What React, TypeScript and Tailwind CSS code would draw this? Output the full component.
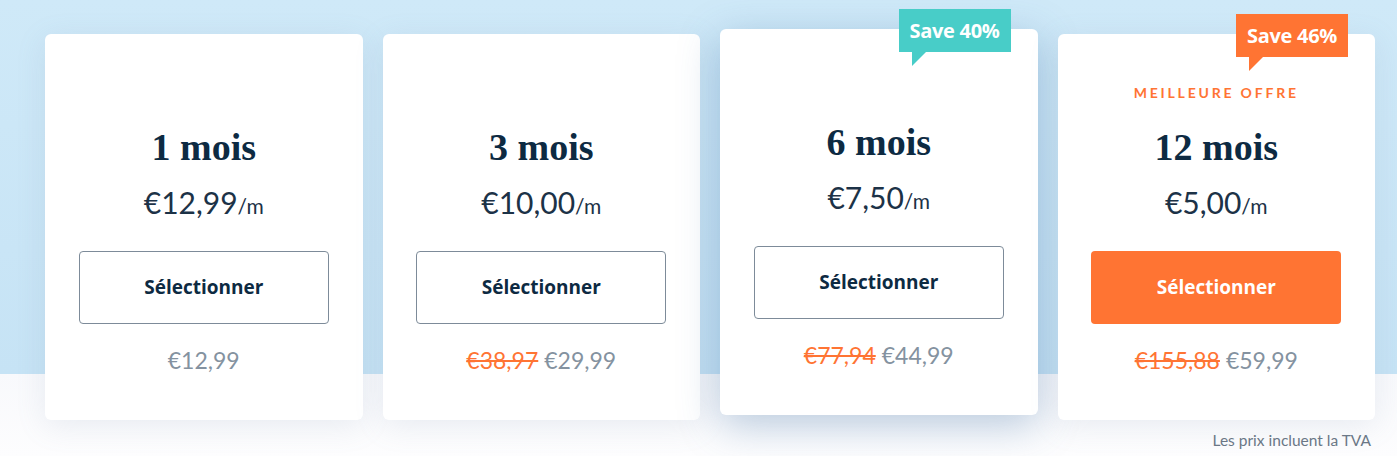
type Plan = {
  months: string;
  price: string;
  oldPrice?: string;
  total: string;
  badge?: string;
  badgeColor?: "teal" | "orange";
  best?: boolean;
  raised?: boolean;
};

const plans: Plan[] = [
  { months: "1 mois", price: "€12,99", total: "€12,99" },
  { months: "3 mois", price: "€10,00", oldPrice: "€38,97", total: "€29,99" },
  {
    months: "6 mois",
    price: "€7,50",
    oldPrice: "€77,94",
    total: "€44,99",
    badge: "Save 40%",
    badgeColor: "teal",
    raised: true,
  },
  {
    months: "12 mois",
    price: "€5,00",
    oldPrice: "€155,88",
    total: "€59,99",
    badge: "Save 46%",
    badgeColor: "orange",
    best: true,
  },
];

function Badge({ text, color }: { text: string; color: "teal" | "orange" }) {
  const bg = color === "teal" ? "bg-[#48cdc8]" : "bg-[#ff7433]";
  const tail = color === "teal" ? "border-t-[#48cdc8]" : "border-t-[#ff7433]";
  return (
    <div className="absolute -top-[20px] right-[27px]">
      <div
        className={`${bg} h-[43px] px-[11px] flex items-center text-white text-[20px] font-bold font-['Open_Sans',sans-serif] tracking-[-0.3px]`}
      >
        {text}
      </div>
      <div
        className={`ml-[13px] w-0 h-0 border-t-[14px] ${tail} border-r-[14px] border-r-transparent`}
      />
    </div>
  );
}

function Card({ plan }: { plan: Plan }) {
  return (
    <div
      className={`relative w-[317.5px] h-[386px] bg-white rounded-[6px] flex flex-col items-center pt-[48px] ${
        plan.raised
          ? "-translate-y-[5px] shadow-[0_10px_40px_rgba(60,110,160,0.35)]"
          : "shadow-[0_6px_30px_rgba(120,140,170,0.14)]"
      }`}
    >
      {plan.badge && plan.badgeColor && (
        <Badge text={plan.badge} color={plan.badgeColor} />
      )}
      <div className="h-[20px] flex items-center text-[14px] font-bold tracking-[0.2em] text-[#ff7433] font-['Lato',sans-serif]">
        {plan.best ? "MEILLEURE OFFRE" : ""}
      </div>
      <h2 className="mt-[23px] h-[44px] leading-[44px] text-[38px] font-bold text-[#0d2a42] font-['Liberation_Serif',serif]">
        {plan.months}
      </h2>
      <div className="mt-[13px] h-[40px] leading-[40px] text-[#1c3247] font-['Lato',sans-serif]">
        <span className="text-[30px]">{plan.price}</span>
        <span className="text-[21px]">/m</span>
      </div>
      <button
        className={`mt-[29px] w-[250px] h-[73px] rounded-[4px] text-[19px] font-bold font-['Open_Sans',sans-serif] ${
          plan.best
            ? "bg-[#ff7433] text-white"
            : "border border-[#7d8b99] text-[#0d2a42] bg-white"
        }`}
      >
        Sélectionner
      </button>
      <div className="mt-[21px] h-[30px] leading-[30px] text-[23px] font-['Lato',sans-serif] flex gap-[6px]">
        {plan.oldPrice && (
          <span className="text-[#ff7433] line-through decoration-[1.5px]">
            {plan.oldPrice}
          </span>
        )}
        <span className="text-[#8492a0]">{plan.total}</span>
      </div>
    </div>
  );
}

export default function App() {
  return (
    <div className="w-[1397px] h-[456px] overflow-hidden bg-[linear-gradient(to_bottom,#cfe9f8_0px,#c6e3f5_374px,#f8f9fc_374px,#fdfdfe_456px)]">
      <div className="pl-[45px] pr-[22px] pt-[34px] flex gap-[20px] items-start">
        {plans.map((p) => (
          <Card key={p.months} plan={p} />
        ))}
      </div>
      <div className="pr-[26px] pt-[9px] text-right text-[15.5px] text-[#6b7886] font-['Lato',sans-serif]">
        Les prix incluent la TVA
      </div>
    </div>
  );
}
